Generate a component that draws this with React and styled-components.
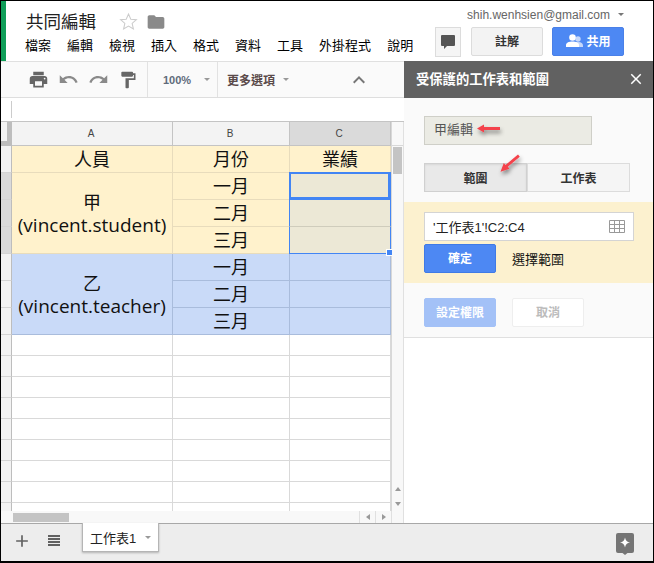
import React from 'react';
import styled, { createGlobalStyle } from 'styled-components';
import { MdPrint, MdUndo, MdRedo, MdFormatPaint, MdFolder, MdExpandLess, MdClose, MdAdd } from 'react-icons/md';

const CJK = `"Liberation Sans", "Noto Sans CJK TC", sans-serif`;

const Global = createGlobalStyle`
  html, body { margin: 0; padding: 0; background: #fff; }
  * { box-sizing: border-box; }
`;

const Frame = styled.div`
  width: 654px; height: 563px; overflow: hidden;
  border-style: solid; border-color: #000; border-width: 1px 1px 2px 1px;
  display: flex; flex-direction: column;
  font-family: ${CJK}; color: #000; background: #fff;
`;

const Header = styled.header`
  height: 60px; flex: none; display: flex; border-left: 5px solid #0f9d58;
`;
const HeaderLeft = styled.div`
  flex: 1; padding-left: 20px; display: flex; flex-direction: column;
`;
const TitleRow = styled.div`
  height: 35px; padding-top: 6px; display: flex; align-items: center;
`;
const Title = styled.div`
  font-size: 17.5px; line-height: 30px; width: 93px; color: #222; font-weight: 400;
`;
const Star = styled.svg`
  width: 19px; height: 19px; margin-right: 8px; fill: #fff; stroke: #ccc; stroke-width: 1.3;
`;
const MenuRow = styled.nav`
  display: flex; gap: 16px; font-size: 13px; line-height: 20px; margin-left: -1px;
`;
const HeaderRight = styled.div`
  padding-right: 29px; display: flex; flex-direction: column; align-items: flex-end;
`;
const Account = styled.div`
  height: 26px; display: flex; align-items: center; gap: 8px; font-size: 12px; color: #666; padding-top: 1px;
`;
const Caret = styled.span`
  display: inline-block; width: 0; height: 0; flex: none;
  border-left: ${p => p.$s || 3}px solid transparent;
  border-right: ${p => p.$s || 3}px solid transparent;
  border-top: ${p => p.$s || 3}px solid ${p => p.$c || '#999'};
`;
const HeaderButtons = styled.div`
  display: flex; align-items: flex-start;
`;
const CommentBtn = styled.button`
  width: 26px; height: 30px; margin-right: 10px; padding: 0; background: #f5f5f5; border: 1px solid #dcdcdc;
  display: flex; align-items: center; justify-content: center;
`;
const NoteBtn = styled.button`
  width: 72px; height: 29px; margin-right: 9px; background: #f3f3f3; border: 1px solid #dcdcdc; border-radius: 2px;
  font: 700 12px ${CJK}; color: #333; padding: 0 0 2px;
`;
const ShareBtn = styled.button`
  width: 72px; height: 29px; background: #4d88f3; border: 1px solid #4a80e8; border-radius: 2px;
  font: 700 12px ${CJK}; color: #fff; padding: 0 0 2px 1px; display: flex; align-items: center; justify-content: center; gap: 3px;
`;

const Body = styled.div`
  flex: 1; display: flex; min-height: 0;
`;
const SheetColumn = styled.div`
  width: 403px; flex: none; display: flex; flex-direction: column; border-top: 1px solid #e0e0e0;
`;
const Toolbar = styled.div`
  height: 36px; flex: none; display: flex; background: #fafafa; border-bottom: 1px solid #dedede;
`;
const ToolGroup = styled.div`
  width: ${p => p.$w}px; flex: none; padding-left: ${p => p.$pl}px; display: flex; align-items: center;
  border-right: 1px solid ${p => p.$plain ? 'transparent' : '#e2e2e2'};
`;
const ToolIcon = styled.span`
  width: 30px; flex: none; display: flex; justify-content: center; color: ${p => p.$soft ? '#8a8a8a' : '#666'};
`;
const ToolLabel = styled.span`
  font-size: ${p => p.$size}px; font-weight: 700; white-space: nowrap; color: ${p => p.$c}; margin-right: ${p => p.$mr}px;
`;
const Collapse = styled.span`
  margin-left: auto; margin-right: 33px; display: flex; align-self: center; color: #777;
`;
const FormulaBar = styled.div`
  height: 24px; flex: none; padding: 3px 0 3px 10px; background: #fff; border-bottom: 1px solid #c4c4c4;
`;
const FormulaTick = styled.div`
  width: 1px; height: 100%; background: #ccc;
`;
const GridArea = styled.div`
  height: 389px; flex: none; display: flex; overflow: hidden;
`;
const Grid = styled.div`
  width: 390px; flex: none; display: grid;
  grid-template-columns: 11px 161px 117px 101px;
  grid-template-rows: 24px repeat(7, 27px) repeat(9, 21px);
  position: relative;
`;
const Corner = styled.div`
  background: #f3f3f3; border-right: 5px solid #bdbdbd; border-bottom: 5px solid #bdbdbd;
`;
const ColHead = styled.div`
  background: ${p => p.$active ? '#dadada' : '#f3f3f3'};
  border-right: 1px solid #c4c4c4; border-bottom: 1px solid #c4c4c4;
  font-size: 10px; color: #444; display: flex; align-items: center; justify-content: center; padding-right: 2px;
`;
const RowHead = styled.div`
  background: ${p => p.$active ? '#dadada' : '#f3f3f3'};
  border-right: 1px solid #bdbdbd; border-bottom: 1px solid #d4d4d4;
`;
const tones = {
  yellow: { bg: '#fff2cc', line: '#e8dcbc' },
  blue: { bg: '#c9daf8', line: '#a9bcdc' },
  white: { bg: '#fff', line: '#d9d9d9' },
  locked: { bg: '#ece8d6', line: '#cfccbc' },
};
const Cell = styled.div`
  position: relative;
  grid-row: ${p => p.$span ? `span ${p.$span}` : 'auto'};
  background: ${p => tones[p.$tone].bg};
  border-right: 1px solid ${p => (p.$edge || p.$rightEdge) ? '#4285f4' : tones[p.$tone].line};
  border-bottom: 1px solid ${p => p.$edge ? '#4285f4' : tones[p.$tone].line};
  ${p => p.$current ? 'box-shadow: inset 0 0 0 2px #4285f4; margin: -1px 0 0 -1px;' : ''}
  ${p => p.$lockedLeft ? 'border-left: 1px solid #4285f4; margin-left: -1px;' : ''}
  display: flex; align-items: center; justify-content: center; text-align: center;
  font: 18px/23px "Open Sans", "Noto Sans CJK TC", sans-serif; color: #111;
  padding-top: 1px;
`;
const PersonLine = styled.span`
  font-size: 19px; white-space: nowrap;
`;
const CellStack = styled.div`
  display: flex; flex-direction: column; align-items: center;
`;
const FillHandle = styled.span`
  position: absolute; right: -2px; bottom: -3px; background: #4285f4;
  border: 1px solid #fff; border-right: 0; box-sizing: content-box; width: 5px; height: 5px; z-index: 2;
`;
const VScroll = styled.div`
  width: 13px; flex: none; background: #f8f8f8; border-left: 1px solid #d8d8d8; border-right: 1px solid #e0e0e0;
  display: flex; flex-direction: column;
`;
const VHead = styled.div`
  height: 24px; flex: none; border-bottom: 1px solid #d8d8d8;
`;
const VThumb = styled.div`
  height: 27px; width: 9px; flex: none; margin: 1px 0 0 1px; background: #c4c4c4;
`;
const VArrows = styled.div`
  margin-top: auto; display: flex; flex-direction: column; align-items: center; gap: 11px; padding-bottom: 5px;
`;
const ArrowUp = styled.span`
  width: 0; height: 0; border-left: 3px solid transparent; border-right: 3px solid transparent; border-bottom: 4px solid #999;
`;
const ArrowDown = styled(ArrowUp)`
  border-bottom: 0; border-top: 4px solid #999;
`;
const HScroll = styled.div`
  height: 12px; flex: none; display: flex; background: #f8f8f8; padding-left: 11px; border-right: 1px solid #e0e0e0;
`;
const HThumb = styled.div`
  width: 56px; height: 9px; margin: 2px 0 0 1px; background: #c4c4c4;
`;
const HButtons = styled.div`
  margin-left: auto; display: flex;
`;
const HButton = styled.div`
  width: ${p => p.$w || 16}px; border-left: 1px solid #e0e0e0; display: flex; align-items: center; justify-content: center;
`;
const ArrowLeft = styled.span`
  width: 0; height: 0; border-top: 3px solid transparent; border-bottom: 3px solid transparent; border-right: 4px solid #999;
`;
const ArrowRight = styled.span`
  width: 0; height: 0; border-top: 3px solid transparent; border-bottom: 3px solid transparent; border-left: 4px solid #999;
`;

const Panel = styled.aside`
  width: 249px; flex: none; position: relative; display: flex; flex-direction: column;
`;
const PanelTitle = styled.div`
  height: 37px; flex: none; background: #616161; color: #fff; padding: 0 8px 2px 12px;
  display: flex; align-items: center; justify-content: space-between; font-size: 13.3px; font-weight: 700;
`;
const PanelMain = styled.div`
  height: 240px; flex: none; background: #fafafa; border-bottom: 1px solid #e0e0e0; display: flex; flex-direction: column;
`;
const NameBox = styled.div`
  width: 168px; height: 29px; margin: 18px 0 0 20px; padding-left: 9px; background: #ebebe4; border: 1px solid #cfcfc8;
  font-size: 13px; line-height: 26px; color: #555;
`;
const Segments = styled.div`
  display: flex; margin: 18px 0 0 20px;
`;
const Segment = styled.button`
  width: 103px; height: 29px; padding: 0; font: 700 12px ${CJK}; color: #333;
  background: ${p => p.$on ? '#e9e9e9' : '#f5f5f5'};
  border: 1px solid ${p => p.$on ? '#d0d0d0' : '#dcdcdc'};
  ${p => p.$on ? 'box-shadow: inset 0 1px 2px rgba(0,0,0,.08);' : ''}
`;
const RangeBox = styled.div`
  height: 81px; margin-top: 10px; background: #fcf1cf; padding: 10px 0 0 20px; flex: none;
`;
const RangeInput = styled.div`
  width: 210px; height: 29px; background: #fff; border: 1px solid #d4d4d4; padding: 0 8px 0 8px;
  display: flex; align-items: center; justify-content: space-between; font-size: 13px; color: #222;
`;
const RangeActions = styled.div`
  display: flex; align-items: center; margin-top: 3px;
`;
const PrimaryBtn = styled.button`
  width: 72px; height: 29px; padding: 0 0 2px; border-radius: 2px; font: 700 12px ${CJK}; color: #fff;
  background: ${p => p.$off ? '#a3c1f7' : '#4d88f3'};
  border: 1px solid ${p => p.$off ? '#a3c1f7' : '#3f7ae6'};
  margin-right: 16px;
`;
const Hint = styled.span`
  font-size: 13px; color: #111; margin-top: -1px;
`;
const PanelActions = styled.div`
  display: flex; margin: 15px 0 0 20px;
`;
const CancelBtn = styled.button`
  width: 72px; height: 29px; padding: 0 0 2px; border-radius: 2px; background: #fff; border: 1px solid #eee;
  font: 700 12px ${CJK}; color: #bbb;
`;
const Annotations = styled.svg`
  position: absolute; left: 0; top: 0; width: 249px; height: 130px; pointer-events: none; overflow: visible;
`;

const TabBar = styled.footer`
  height: 38px; flex: none; background: #ededed; border-top: 1px solid #a8a8a8; display: flex; align-items: flex-start;
  position: relative; padding-right: 19px;
`;
const TabIcon = styled.span`
  width: ${p => p.$w}px; height: 33px; flex: none; display: flex; align-items: center; justify-content: center; color: #616161;
`;
const ListIcon = styled.span`
  width: 12px; height: 11px;
  background: repeating-linear-gradient(#616161 0 2px, transparent 2px 3px);
`;
const Tab = styled.div`
  width: 77px; height: 29px; margin: -1px 0 0 22px; background: #fff; padding-left: 7px;
  border: 1px solid #b5b5b5; border-top: 0; box-shadow: 0 1px 2px rgba(0,0,0,.25);
  display: flex; align-items: center; font-size: 13px; color: #222; gap: 9px;
`;
const IconGap = styled.span`
  width: 4px; flex: none;
`;
const Explore = styled.svg`
  margin-left: auto; margin-top: 9px; width: 18px; height: 22px;
`;

const monthCell = (label, tone) => <Cell $tone={tone}>{label}</Cell>;

export default function App() {
  const blanks = Array.from({ length: 9 });
  return (
    <Frame>
      <Global />
      <Header>
        <HeaderLeft>
          <TitleRow>
            <Title>共同編輯</Title>
            <Star viewBox="0 0 24 24"><path d="M12 2.500l2.900 6.600 7.100.7-5.400 4.700 1.600 7-6.200-3.700-6.200 3.700 1.600-7L2 9.800l7.100-.7z" /></Star>
            <MdFolder size={20} color="#8a8a8a" />
          </TitleRow>
          <MenuRow>
            {['檔案', '編輯', '檢視', '插入', '格式', '資料', '工具', '外掛程式', '說明'].map(m => <span key={m}>{m}</span>)}
          </MenuRow>
        </HeaderLeft>
        <HeaderRight>
          <Account>shih.wenhsien@gmail.com<Caret $c="#777" /></Account>
          <HeaderButtons>
            <CommentBtn>
              <svg width="14" height="15" viewBox="0 0 14 15"><path d="M1 0h12a1 1 0 0 1 1 1v9a1 1 0 0 1-1 1H6l-3 3v-3H1a1 1 0 0 1-1-1V1a1 1 0 0 1 1-1z" fill="#555" /></svg>
            </CommentBtn>
            <NoteBtn>註解</NoteBtn>
            <ShareBtn>
              <svg width="17" height="13" viewBox="0 0 17 13">
                <circle cx="12" cy="5" r="2.700" fill="#c6d8fa" />
                <path d="M8 13v-1.500c0-2 2-3.500 4.500-3.500s4.500 1.500 4.500 3.500V13z" fill="#c6d8fa" />
                <circle cx="6.500" cy="3.500" r="3.300" fill="#fff" />
                <path d="M0 13v-1.800C0 8.600 3 7.500 6.500 7.500s6.500 1.100 6.500 3.700V13z" fill="#fff" />
              </svg>
              共用
            </ShareBtn>
          </HeaderButtons>
        </HeaderRight>
      </Header>
      <Body>
        <SheetColumn>
          <Toolbar>
            <ToolGroup $w={147} $pl={22}>
              <ToolIcon><MdPrint size={21} /></ToolIcon>
              <ToolIcon $soft><MdUndo size={21} /></ToolIcon>
              <ToolIcon $soft><MdRedo size={21} /></ToolIcon>
              <ToolIcon><MdFormatPaint size={20} /></ToolIcon>
            </ToolGroup>
            <ToolGroup $w={70} $pl={15}>
              <ToolLabel $size={11} $c="#5f6b7a" $mr={13}>100%</ToolLabel><Caret />
            </ToolGroup>
            <ToolGroup $w={75} $pl={9} $plain>
              <ToolLabel $size={12} $c="#5a4a4a" $mr={8}>更多選項</ToolLabel><Caret />
            </ToolGroup>
            <Collapse><MdExpandLess size={24} /></Collapse>
          </Toolbar>
          <FormulaBar><FormulaTick /></FormulaBar>
          <GridArea>
            <Grid>
              <Corner />
              <ColHead>A</ColHead><ColHead>B</ColHead><ColHead $active>C</ColHead>

              <RowHead /><Cell $tone="yellow">人員</Cell><Cell $tone="yellow">月份</Cell><Cell $tone="yellow">業績</Cell>

              <RowHead $active />
              <Cell $tone="yellow" $span={3}><CellStack>甲<PersonLine>(vincent.student)</PersonLine></CellStack></Cell>
              {monthCell('一月', 'yellow')}<Cell $tone="locked" $current $edge />
              <RowHead $active />{monthCell('二月', 'yellow')}<Cell $tone="locked" $lockedLeft $rightEdge />
              <RowHead $active />{monthCell('三月', 'yellow')}<Cell $tone="locked" $lockedLeft $edge><FillHandle /></Cell>

              <RowHead />
              <Cell $tone="blue" $span={3}><CellStack>乙<PersonLine>(vincent.teacher)</PersonLine></CellStack></Cell>
              {monthCell('一月', 'blue')}<Cell $tone="blue" />
              <RowHead />{monthCell('二月', 'blue')}<Cell $tone="blue" />
              <RowHead />{monthCell('三月', 'blue')}<Cell $tone="blue" />

              {blanks.map((_, i) => (
                <React.Fragment key={i}>
                  <RowHead /><Cell $tone="white" /><Cell $tone="white" /><Cell $tone="white" />
                </React.Fragment>
              ))}
            </Grid>
            <VScroll>
              <VHead />
              <VThumb />
              <VArrows><ArrowUp /><ArrowDown /></VArrows>
            </VScroll>
          </GridArea>
          <HScroll>
            <HThumb />
            <HButtons>
              <HButton><ArrowLeft /></HButton>
              <HButton><ArrowRight /></HButton>
              <HButton $w={12} />
            </HButtons>
          </HScroll>
        </SheetColumn>
        <Panel>
          <PanelTitle>受保護的工作表和範圍<MdClose size={18} color="#fff" /></PanelTitle>
          <PanelMain>
            <NameBox>甲編輯</NameBox>
            <Segments>
              <Segment $on>範圍</Segment>
              <Segment>工作表</Segment>
            </Segments>
            <RangeBox>
              <RangeInput>
                '工作表1'!C2:C4
                <svg width="16" height="13" viewBox="0 0 16 13" fill="none" stroke="#999" strokeWidth="1">
                  <path d="M.5.5h15v12H.5zM.5 4.500h15M.5 8.500h15M5.500.5v12M10.500.5v12" />
                </svg>
              </RangeInput>
              <RangeActions>
                <PrimaryBtn>確定</PrimaryBtn>
                <Hint>選擇範圍</Hint>
              </RangeActions>
            </RangeBox>
            <PanelActions>
              <PrimaryBtn $off>設定權限</PrimaryBtn>
              <CancelBtn>取消</CancelBtn>
            </PanelActions>
          </PanelMain>
          <Annotations viewBox="0 0 249 130">
            <defs>
              <filter id="sh" x="-50%" y="-100%" width="200%" height="300%">
                <feDropShadow dx="1" dy="3" stdDeviation="2" floodColor="#000" floodOpacity=".45" />
              </filter>
            </defs>
            <g filter="url(#sh)">
              <path d="M73 67.500l7-4v2.500h16v3H80v2.500z" fill="#f4424b" />
              <path d="M114 93.500l1.800 2.200-12 10 1.700 2.100-9 3 3.300-8.800 1.700 2z" fill="#f4424b" />
            </g>
          </Annotations>
        </Panel>
      </Body>
      <TabBar>
        <TabIcon $w={42}><MdAdd size={20} /></TabIcon>
        <IconGap />
        <TabIcon $w={13}><ListIcon /></TabIcon>
        <Tab>工作表1<Caret /></Tab>
        <Explore viewBox="0 0 18 22">
          <path d="M2 0h14a2 2 0 0 1 2 2v16a2 2 0 0 1-2 2h-4.500L9 22l-2.500-2H2a2 2 0 0 1-2-2V2a2 2 0 0 1 2-2z" fill="#757575" />
          <path d="M9 4.500c.6 3 2 4.400 5 5-3 .6-4.400 2-5 5-.6-3-2-4.400-5-5 3-.6 4.400-2 5-5z" fill="#fff" />
        </Explore>
      </TabBar>
    </Frame>
  );
}
